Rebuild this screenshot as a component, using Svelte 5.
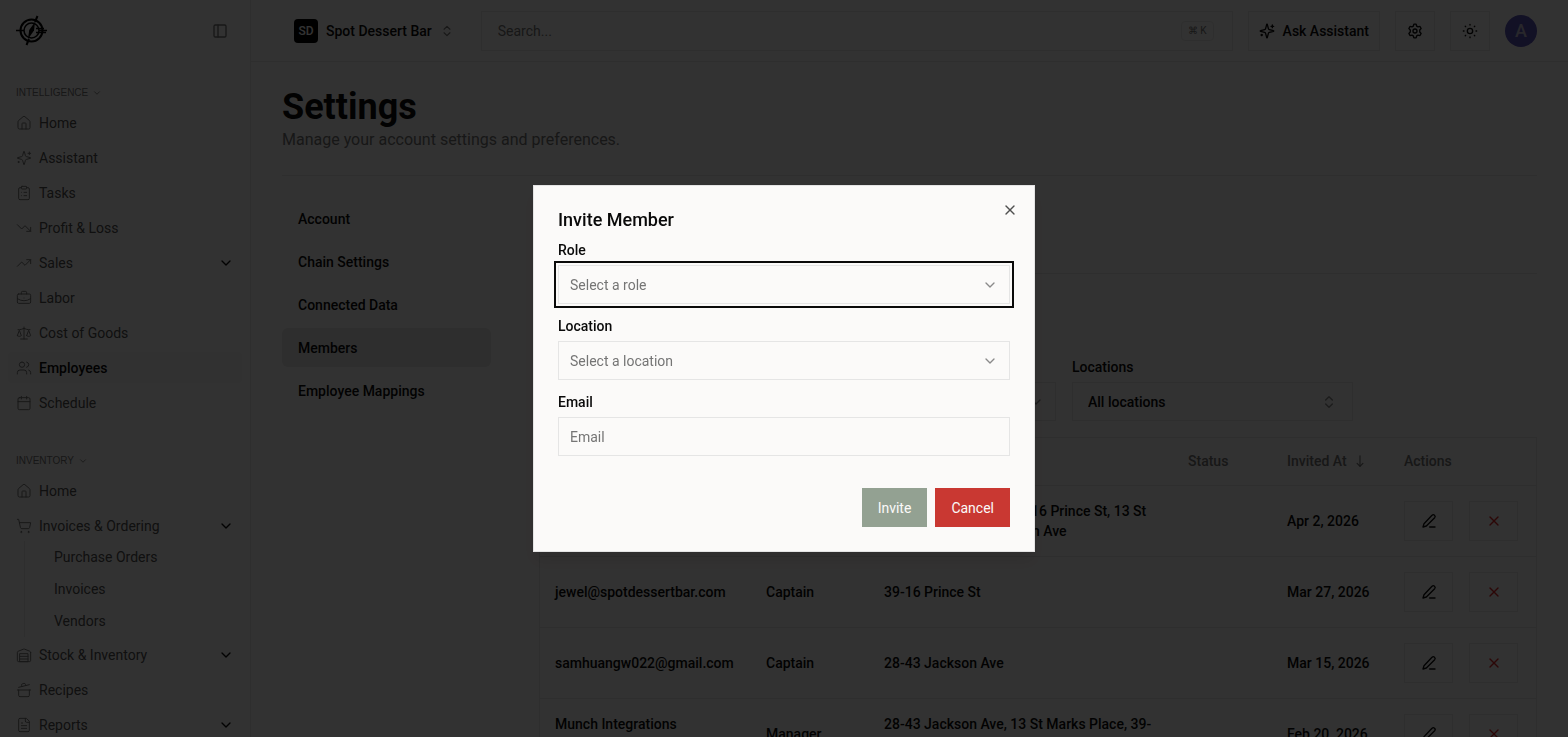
<!--
  Settings / Members page with the invite dialog open on top.
-->
<script lang="ts">
  interface NavItem {
    label: string;
    icon: string;
    active?: boolean;
    expandable?: boolean;
    children?: string[];
  }

  interface Member {
    email: string;
    role: string;
    locations: string[];
    invitedAt: string;
  }

  // 24x24 stroke icons, one string per path
  const icons: Record<string, string[]> = {
    home: ['M15 21v-8a1 1 0 0 0-1-1h-4a1 1 0 0 0-1 1v8', 'M3 10a2 2 0 0 1 .7-1.5l7-6a2 2 0 0 1 2.6 0l7 6A2 2 0 0 1 21 10v9a2 2 0 0 1-2 2H5a2 2 0 0 1-2-2z'],
    sparkles: ['M9.9 15.5A2 2 0 0 0 8.5 14.1l-6.1-1.6a.5.5 0 0 1 0-1L8.5 9.9A2 2 0 0 0 9.9 8.5l1.6-6.1a.5.5 0 0 1 1 0l1.6 6.1A2 2 0 0 0 15.5 9.9l6.1 1.6a.5.5 0 0 1 0 1L15.5 14.1a2 2 0 0 0-1.4 1.4l-1.6 6.1a.5.5 0 0 1-1 0z', 'M20 3v4', 'M22 5h-4', 'M4 17v2', 'M5 18H3'],
    tasks: ['M9 2h6a1 1 0 0 1 1 1v2a1 1 0 0 1-1 1H9a1 1 0 0 1-1-1V3a1 1 0 0 1 1-1z', 'M16 4h2a2 2 0 0 1 2 2v14a2 2 0 0 1-2 2H6a2 2 0 0 1-2-2V6a2 2 0 0 1 2-2h2', 'M12 11h4', 'M12 16h4', 'M8 11h.01', 'M8 16h.01'],
    down: ['M22 17l-8.5-8.5-5 5L2 7', 'M16 17h6v-6'],
    up: ['M22 7l-8.5 8.5-5-5L2 17', 'M16 7h6v6'],
    briefcase: ['M12 12h.01', 'M16 6V4a2 2 0 0 0-2-2h-4a2 2 0 0 0-2 2v2', 'M22 13a18.15 18.15 0 0 1-20 0', 'M4 6h16a2 2 0 0 1 2 2v10a2 2 0 0 1-2 2H4a2 2 0 0 1-2-2V8a2 2 0 0 1 2-2z'],
    scale: ['M16 16l3-8 3 8c-.9.65-1.9 1-3 1s-2.1-.35-3-1', 'M2 16l3-8 3 8c-.9.65-1.9 1-3 1s-2.1-.35-3-1', 'M7 21h10', 'M12 3v18', 'M3 7h2c2 0 5-1 7-2 2 1 5 2 7 2h2'],
    users: ['M16 21v-2a4 4 0 0 0-4-4H6a4 4 0 0 0-4 4v2', 'M9 3a4 4 0 1 1 0 8 4 4 0 0 1 0-8', 'M22 21v-2a4 4 0 0 0-3-3.9', 'M16 3.1a4 4 0 0 1 0 7.8'],
    calendar: ['M8 2v4', 'M16 2v4', 'M5 4h14a2 2 0 0 1 2 2v14a2 2 0 0 1-2 2H5a2 2 0 0 1-2-2V6a2 2 0 0 1 2-2z', 'M3 10h18'],
    cart: ['M8 20a1 1 0 1 1 0 2 1 1 0 0 1 0-2', 'M19 20a1 1 0 1 1 0 2 1 1 0 0 1 0-2', 'M2 2h2l2.7 12.4a2 2 0 0 0 2 1.6h9.7a2 2 0 0 0 2-1.6L22 7H5.1'],
    warehouse: ['M22 8.3V20a2 2 0 0 1-2 2H4a2 2 0 0 1-2-2V8.3a2 2 0 0 1 1.3-1.9l8-3.2a2 2 0 0 1 1.5 0l8 3.2A2 2 0 0 1 22 8.3z', 'M6 18h12', 'M6 14h12', 'M6 10h12v12H6z'],
    pot: ['M2 12h20', 'M20 12v8a2 2 0 0 1-2 2H6a2 2 0 0 1-2-2v-8', 'M4 8l16-4', 'M8.9 6.8l-.5-1.8a2 2 0 0 1 1.5-2.4l1.9-.5a2 2 0 0 1 2.4 1.5l.5 1.8'],
    file: ['M15 2H6a2 2 0 0 0-2 2v16a2 2 0 0 0 2 2h12a2 2 0 0 0 2-2V7z', 'M14 2v4a2 2 0 0 0 2 2h4', 'M10 9H8', 'M16 13H8', 'M16 17H8'],
    panel: ['M5 3h14a2 2 0 0 1 2 2v14a2 2 0 0 1-2 2H5a2 2 0 0 1-2-2V5a2 2 0 0 1 2-2z', 'M9 3v18'],
    chevron: ['M6 9l6 6 6-6'],
    updown: ['M7 15l5 5 5-5', 'M7 9l5-5 5 5'],
    gear: ['M10.3 1.8h3.4l.9 3 1.9 1.1 3-.7 1.7 3-2.1 2.2v3.2l2.1 2.2-1.7 3-3-.7-1.9 1.1-.9 3h-3.4l-.9-3-1.9-1.1-3 .7-1.7-3 2.1-2.2v-3.2L2.8 8.2l1.7-3 3 .7 1.9-1.1z', 'M12 9a3 3 0 1 1 0 6 3 3 0 0 1 0-6'],
    sun: ['M12 8a4 4 0 1 1 0 8 4 4 0 0 1 0-8', 'M12 2v1', 'M12 21v1', 'M4.9 4.9l.6.6', 'M18.5 18.5l.6.6', 'M2 12h1', 'M21 12h1', 'M4.9 19.1l.6-.6', 'M18.5 5.5l.6-.6'],
    arrow: ['M12 3v18', 'M17 16l-5 5-5-5'],
    pen: ['M13 21h8', 'M16.5 3.5a2.1 2.1 0 0 1 4 3.5L8 19.5l-5 1.5 1.5-5z'],
    close: ['M18 6L6 18', 'M6 6l12 12'],
  };

  const sections: { title: string; items: NavItem[] }[] = [
    {
      title: 'Intelligence',
      items: [
        { label: 'Home', icon: 'home' },
        { label: 'Assistant', icon: 'sparkles' },
        { label: 'Tasks', icon: 'tasks' },
        { label: 'Profit & Loss', icon: 'down' },
        { label: 'Sales', icon: 'up', expandable: true },
        { label: 'Labor', icon: 'briefcase' },
        { label: 'Cost of Goods', icon: 'scale' },
        { label: 'Employees', icon: 'users', active: true },
        { label: 'Schedule', icon: 'calendar' },
      ],
    },
    {
      title: 'Inventory',
      items: [
        { label: 'Home', icon: 'home' },
        {
          label: 'Invoices & Ordering',
          icon: 'cart',
          expandable: true,
          children: ['Purchase Orders', 'Invoices', 'Vendors'],
        },
        { label: 'Stock & Inventory', icon: 'warehouse', expandable: true },
        { label: 'Recipes', icon: 'pot' },
        { label: 'Reports', icon: 'file', expandable: true },
      ],
    },
  ];

  const tabs = ['Account', 'Chain Settings', 'Connected Data', 'Members', 'Employee Mappings'];

  const members: Member[] = [
    {
      email: 'team@spotdessertbar.com',
      role: 'Manager',
      locations: ['28-43 Jackson Ave, 39-16 Prince St, 13 St', 'Marks Place, 5320 118th Ave'],
      invitedAt: 'Apr 2, 2026',
    },
    { email: 'jewel@spotdessertbar.com', role: 'Captain', locations: ['39-16 Prince St'], invitedAt: 'Mar 27, 2026' },
    { email: 'samhuangw022@gmail.com', role: 'Captain', locations: ['28-43 Jackson Ave'], invitedAt: 'Mar 15, 2026' },
    {
      email: 'Munch Integrations Administrator',
      role: 'Manager',
      locations: ['28-43 Jackson Ave, 13 St Marks Place, 39-', '16 Prince St'],
      invitedAt: 'Feb 20, 2026',
    },
  ];

  let tab = $state('Members');
  let open = $state(true);
  let role = $state('');
  let location = $state('');
  let email = $state('');

  const canInvite = $derived(role !== '' && location !== '' && email !== '');
</script>

{#snippet icon(name: string, size = 16)}
  <svg class="icon" width={size} height={size} viewBox="0 0 24 24" aria-hidden="true">
    {#each icons[name] as d}
      <path {d} />
    {/each}
  </svg>
{/snippet}

<div class="app">
  <aside class="sidebar">
    <div class="brand">
      <svg class="logo" width="32" height="32" viewBox="0 0 32 32" aria-label="Logo" role="img">
        <circle cx="15.5" cy="15.5" r="11" stroke-width="2" />
        <circle cx="15.5" cy="15.5" r="7.5" stroke-width="1.5" />
        <path d="M0 15.5h8M20 13.5h8M23 15.5h8M20 17.5h10" stroke-width="1.5" />
        <path d="M21.5 1l-2.5 6M13 24l-2.5 6" stroke-width="2" />
        <path class="needle" d="M19 7l-1 8.5-6 8.5 1.2-9z" />
      </svg>
      <button class="plain muted" aria-label="Toggle sidebar">{@render icon('panel')}</button>
    </div>

    {#each sections as section}
      <nav class="section" aria-label={section.title}>
        <button class="plain section-title">{section.title} {@render icon('chevron', 10)}</button>
        <ul>
          {#each section.items as item}
            <li>
              <a href="#{item.icon}" class="nav-item" class:active={item.active}>
                {@render icon(item.icon)}
                <span>{item.label}</span>
                {#if item.expandable}
                  <span class="caret">{@render icon('chevron')}</span>
                {/if}
              </a>
              {#if item.children}
                <ul class="children">
                  {#each item.children as child}
                    <li><a href="#child">{child}</a></li>
                  {/each}
                </ul>
              {/if}
            </li>
          {/each}
        </ul>
      </nav>
    {/each}
  </aside>

  <div class="page">
    <header class="topbar">
      <button class="plain switcher">
        <span class="badge">SD</span>
        Spot Dessert Bar
        <span class="faint">{@render icon('updown', 14)}</span>
      </button>
      <label class="search">
        <input type="search" placeholder="Search..." aria-label="Search" />
        <kbd>⌘ K</kbd>
      </label>
      <button class="outline">{@render icon('sparkles')} Ask Assistant</button>
      <button class="outline square" aria-label="Settings">{@render icon('gear')}</button>
      <button class="outline square" aria-label="Theme">{@render icon('sun')}</button>
      <button class="plain avatar" aria-label="Account">A</button>
    </header>

    <main>
      <h1>Settings</h1>
      <p class="subtitle">Manage your account settings and preferences.</p>

      <div class="columns">
        <nav class="tabs" aria-label="Settings">
          {#each tabs as name}
            <button class="plain" class:current={tab === name} onclick={() => (tab = name)}>{name}</button>
          {/each}
        </nav>

        <section class="content">
          <div class="content-head"></div>

          <div class="filters">
            <div class="filter">
              <label for="filter-role">Role</label>
              <div class="select">
                <select id="filter-role"><option>All roles</option></select>
                {@render icon('chevron')}
              </div>
            </div>
            <div class="filter">
              <label for="filter-location">Locations</label>
              <div class="select tinted">
                <select id="filter-location"><option>All locations</option></select>
                {@render icon('updown')}
              </div>
            </div>
          </div>

          <div class="table-wrap">
            <table>
              <thead>
                <tr>
                  <th class="col-email">Email</th>
                  <th class="col-role">Role</th>
                  <th>Locations</th>
                  <th class="col-status">Status</th>
                  <th class="col-date"><span class="sort">Invited At {@render icon('arrow', 14)}</span></th>
                  <th class="col-actions">Actions</th>
                </tr>
              </thead>
              <tbody>
                {#each members as member}
                  <tr>
                    <td>{member.email}</td>
                    <td>{member.role}</td>
                    <td>
                      {#each member.locations as line}
                        <div class="line">{line}</div>
                      {/each}
                    </td>
                    <td></td>
                    <td class="line">{member.invitedAt}</td>
                    <td>
                      <div class="actions">
                        <button class="outline" aria-label="Edit {member.email}">{@render icon('pen')}</button>
                        <button class="outline danger" aria-label="Remove {member.email}">{@render icon('close')}</button>
                      </div>
                    </td>
                  </tr>
                {/each}
              </tbody>
            </table>
          </div>
        </section>
      </div>
    </main>
  </div>
</div>

{#if open}
  <div class="overlay">
    <div class="dialog" role="dialog" aria-modal="true" aria-labelledby="invite-title">
      <div class="dialog-head">
        <h2 id="invite-title">Invite Member</h2>
        <button class="plain close" aria-label="Close" onclick={() => (open = false)}>{@render icon('close')}</button>
      </div>

      <form onsubmit={(e) => e.preventDefault()}>
        <label for="role">Role</label>
        <div class="select focused">
          <select id="role" class:empty={role === ''} bind:value={role}>
            <option value="">Select a role</option>
            <option>Captain</option>
            <option>Manager</option>
          </select>
          {@render icon('chevron')}
        </div>

        <label for="location">Location</label>
        <div class="select">
          <select id="location" class:empty={location === ''} bind:value={location}>
            <option value="">Select a location</option>
            <option>28-43 Jackson Ave</option>
            <option>39-16 Prince St</option>
          </select>
          {@render icon('chevron')}
        </div>

        <label for="email">Email</label>
        <input id="email" class="field" type="email" placeholder="Email" bind:value={email} />

        <div class="buttons">
          <button class="btn primary" type="submit" disabled={!canInvite}>Invite</button>
          <button class="btn destructive" type="button" onclick={() => (open = false)}>Cancel</button>
        </div>
      </form>
    </div>
  </div>
{/if}

<style>
  :global(body) {
    --bg: #fbfaf9;
    --fg: #0a0a0a;
    --nav: #505050;
    --muted: #757575;
    --border: #e5e5e5;
    background: var(--bg);
    color: var(--fg);
    font-family: Roboto, 'Liberation Sans', sans-serif;
    font-size: 14px;
    line-height: 20px;
    overflow: hidden;
  }
  * { box-sizing: border-box; }
  h1, h2, p, ul { margin: 0; padding: 0; }
  ul { list-style: none; }
  a { color: inherit; text-decoration: none; }
  button, input, select { font: inherit; color: inherit; }
  button { cursor: pointer; }
  .icon {
    display: block;
    flex: none;
    fill: none;
    stroke: currentColor;
    stroke-width: 2;
    stroke-linecap: round;
    stroke-linejoin: round;
  }
  .plain {
    border: 0;
    padding: 0;
    background: none;
  }
  .muted, .faint { color: var(--muted); }

  .app {
    display: flex;
    height: 100vh;
    overflow: hidden;
  }
  .sidebar {
    flex: none;
    width: 251px;
    overflow: hidden;
    border-right: 1px solid var(--border);
    color: var(--nav);
  }
  .brand {
    display: flex;
    align-items: center;
    justify-content: space-between;
    height: 62px;
    padding: 0 22px 0 16px;
  }
  .logo { fill: none; stroke: #000; }
  .logo .needle { fill: #000; stroke: none; }
  .section { padding: 24px 8px 0; }
  .section + .section { padding-top: 32px; }
  .section-title {
    display: flex;
    align-items: center;
    gap: 4px;
    height: 14px;
    margin: 0 8px 7px;
    font-family: 'Liberation Sans', sans-serif;
    font-size: 10px;
    text-transform: uppercase;
    color: var(--muted);
  }
  .nav-item {
    display: flex;
    align-items: center;
    gap: 7px;
    height: 31px;
    margin-bottom: 4px;
    padding: 0 8px;
    border-radius: 4px;
  }
  .nav-item > :global(.icon) {
    color: var(--muted);
    stroke-width: 1.5;
  }
  .nav-item.active {
    background: #f4f4f4;
    color: var(--fg);
    font-weight: 500;
  }
  .caret {
    margin-left: auto;
    color: var(--fg);
  }
  .children {
    margin: -4px 16px 2px;
    padding-left: 29px;
    border-left: 1px solid var(--border);
  }
  .children a {
    display: block;
    height: 32px;
    line-height: 32px;
  }

  .page {
    flex: 1;
    min-width: 0;
  }
  .topbar {
    display: flex;
    align-items: center;
    gap: 15px;
    height: 62px;
    padding: 0 31px;
    border-bottom: 1px solid var(--border);
  }
  .switcher {
    display: flex;
    align-items: center;
    gap: 8px;
    padding: 0 12px;
    font-weight: 500;
  }
  .badge {
    display: grid;
    place-items: center;
    width: 24px;
    height: 24px;
    border-radius: 4px;
    background: #000;
    color: #fff;
    font-size: 12px;
  }
  .search {
    display: flex;
    flex: 1;
    align-items: center;
    height: 40px;
    padding: 0 18px 0 16px;
    border: 1px solid var(--border);
  }
  .search input {
    flex: 1;
    min-width: 0;
    padding: 0;
    border: 0;
    background: none;
    outline: none;
  }
  input::placeholder {
    color: var(--muted);
    opacity: 1;
  }
  kbd {
    padding: 0 6px;
    border: 1px solid var(--border);
    border-radius: 4px;
    font: inherit;
    font-size: 10px;
    line-height: 18px;
    color: var(--muted);
  }
  .outline {
    display: flex;
    align-items: center;
    justify-content: center;
    gap: 8px;
    height: 40px;
    padding: 0 10px;
    border: 1px solid var(--border);
    background: none;
    font-weight: 500;
  }
  .square { width: 40px; }
  .avatar {
    width: 32px;
    height: 32px;
    border-radius: 50%;
    background: #5a54b8;
    color: #c8c4d8;
    font-size: 18px;
    font-weight: 500;
  }

  main { padding: 25px 31px 0; }
  h1 {
    font-size: 36px;
    line-height: 40px;
    font-weight: 700;
  }
  .subtitle {
    padding: 1px 0 23px;
    border-bottom: 1px solid var(--border);
    font-size: 16px;
    line-height: 24px;
    color: var(--muted);
  }
  .columns {
    display: flex;
    gap: 48px;
    padding-top: 23px;
  }
  .tabs {
    display: flex;
    flex: none;
    flex-direction: column;
    gap: 4px;
    width: 209px;
  }
  .tabs button {
    height: 39px;
    padding: 0 16px;
    border-radius: 6px;
    text-align: left;
    font-weight: 500;
  }
  .tabs .current { background: #e5e5e5; }
  .content {
    flex: 1;
    min-width: 0;
  }
  .content-head {
    height: 75px;
    border-bottom: 1px solid var(--border);
  }
  .filters {
    display: flex;
    justify-content: flex-end;
    gap: 16px;
    padding: 83px 184px 16px 0;
  }
  .filter {
    display: flex;
    flex: none;
    flex-direction: column;
    gap: 5px;
    width: 281px;
    font-weight: 500;
  }
  .table-wrap { border: 1px solid var(--border); }
  table {
    width: 100%;
    border-collapse: collapse;
    table-layout: fixed;
  }
  th {
    height: 47px;
    padding: 0 15px;
    border-bottom: 1px solid var(--border);
    text-align: left;
    font-weight: 500;
    color: var(--muted);
  }
  td {
    height: 71px;
    padding: 0 15px;
    border-bottom: 1px solid var(--border);
    font-weight: 500;
  }
  .col-email { width: 211px; }
  .col-role { width: 118px; }
  .col-status { width: 99px; }
  .col-date { width: 117px; }
  .col-actions { width: 147px; }
  .line, .sort { white-space: nowrap; }
  .sort {
    display: flex;
    align-items: center;
    gap: 6px;
  }
  .actions {
    display: flex;
    gap: 16px;
  }
  .actions .outline {
    flex: none;
    width: 49px;
  }
  .danger { color: #dc2626; }

  /* the icon shares the select's grid cell */
  .select {
    display: grid;
    align-items: center;
  }
  .select select, .select > :global(.icon) { grid-area: 1 / 1; }
  .select > :global(.icon) {
    justify-self: end;
    margin-right: 12px;
    color: #8a8a8a;
    pointer-events: none;
  }
  .select select, .field {
    appearance: none;
    width: 100%;
    height: 39px;
    padding: 0 11px;
    border: 1px solid var(--border);
    border-radius: 0;
    background: none;
    outline: none;
  }
  .tinted select {
    padding: 0 15px;
    background: #f7f7f7;
  }
  .tinted > :global(.icon) { margin-right: 16px; }
  .select .empty { color: var(--muted); }
  .focused { outline: 2px solid var(--fg); outline-offset: 2px; }

  .overlay {
    position: fixed;
    inset: 0;
    display: grid;
    place-items: center;
    background: rgb(0 0 0 / 80%);
  }
  .dialog {
    width: 100%;
    max-width: 502px;
    padding: 24px;
    border: 1px solid #e4e4e4;
    background: var(--bg);
    box-shadow: 0 10px 15px rgb(0 0 0 / 10%);
  }
  .dialog-head {
    display: flex;
    justify-content: space-between;
    height: 30px;
  }
  .dialog h2 {
    font-size: 18px;
    line-height: 20px;
    font-weight: 500;
  }
  .close {
    height: 16px;
    margin: -8px -8px 0 0;
    color: var(--nav);
  }
  form {
    display: flex;
    flex-direction: column;
  }
  form label {
    margin-bottom: 5px;
    line-height: 20px;
    font-weight: 500;
  }
  form .select { margin-bottom: 12px; }
  .buttons {
    display: flex;
    justify-content: flex-end;
    gap: 8px;
    margin-top: 32px;
  }
  .btn {
    height: 39px;
    padding: 0 16px;
    border: 0;
    color: #fbfaf9;
  }
  .primary { background: #93a192; }
  .destructive { background: #c93832; }
</style>
